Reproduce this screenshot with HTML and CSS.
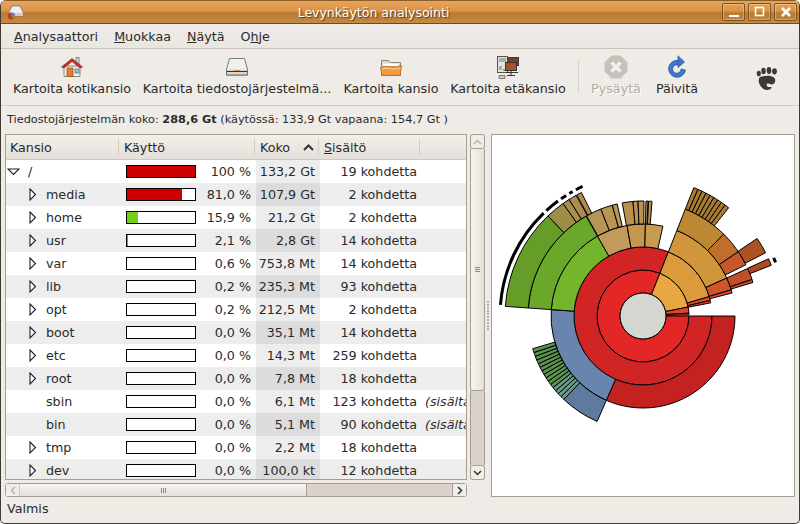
FILE: index.html
```html
<!doctype html>
<html lang="fi">
<head>
  <title>Levynkäytön analysointi</title>
  <meta charset="utf-8">
  <link rel="stylesheet" href="styles.css">
</head>
<body>
<div id="win">
  <!-- title bar -->
  <div class="titlebar">
    <svg class="appicon" width="18" height="16" viewBox="0 0 18 16">
      <path d="M5 2h8l3 6v4H2V8z" fill="#eeeeec" stroke="#777" stroke-width=".8"/>
      <path d="M2 9h14v3H2z" fill="#ccc"/>
      <circle cx="4.5" cy="12" r="3.4" fill="#c4302b"/>
      <path d="M4.5 12V8.6A3.4 3.4 0 0 1 7.9 12z" fill="#4c8fc9"/>
      <path d="M4.5 12h3.4a3.4 3.4 0 0 1-1.6 2.9z" fill="#6fae2c"/>
    </svg>
    <div class="wintitle">Levynkäytön analysointi</div>
    <div class="winbtns">
      <div class="winbtn"><svg width="24" height="22" viewBox="0 0 24 22"><path d="M7 15h10" stroke="#fff" stroke-width="2"/></svg></div>
      <div class="winbtn"><svg width="24" height="22" viewBox="0 0 24 22"><rect x="7.5" y="6.5" width="8" height="8" fill="none" stroke="#fff" stroke-width="1.6"/></svg></div>
      <div class="winbtn"><svg width="24" height="22" viewBox="0 0 24 22"><path d="M8 7l8 8M16 7l-8 8" stroke="#fff" stroke-width="2.6"/></svg></div>
    </div>
  </div>

  <!-- menu -->
  <div class="menubar">
    <span><u>A</u>nalysaattori</span>
    <span><u>M</u>uokkaa</span>
    <span><u>N</u>äytä</span>
    <span>O<u>h</u>je</span>
  </div>

  <!-- toolbar -->
  <div class="toolbar">
    <div class="tool t-home">
      <svg width="24" height="24" viewBox="0 0 24 24">
        <path d="M4 11h16v10.500H4z" fill="#f3f1ec" stroke="#8a8780"/>
        <rect x="16" y="2.500" width="3" height="6" fill="#d8d4cc" stroke="#8a8780"/>
        <path d="M1.500 12L12 3.500 22.500 12 20 13 12 6.500 4 13z" fill="#c4302b" stroke="#8f2320" stroke-width=".7"/>
        <rect x="7" y="13" width="6" height="8.500" fill="#e0812b" stroke="#9b5a16" stroke-width=".8"/>
        <rect x="15" y="14" width="4" height="4" fill="#8fc8d8" stroke="#5c7a86" stroke-width=".8"/>
      </svg>
      <span>Kartoita kotikansio</span>
    </div>
    <div class="tool t-fs">
      <svg width="24" height="24" viewBox="0 0 24 24">
        <path d="M4.500 3.500h15l3 11v5.500H1.500v-5.500z" fill="#f1f1ef" stroke="#7c7c78"/>
        <path d="M2 14.500h20v5.500H2z" fill="#d6d6d2"/>
        <path d="M2 16.500h20" stroke="#33332f"/>
        <path d="M9 15.500h6" stroke="#e8912c" stroke-width="1.200"/>
        <path d="M1.500 14.500v5.500h21v-5.500" fill="none" stroke="#6c6c68"/>
      </svg>
      <span>Kartoita tiedostojärjestelmä...</span>
    </div>
    <div class="tool t-dir">
      <svg width="24" height="24" viewBox="0 0 24 24">
        <path d="M2.500 5.500h7l2 2h10v13h-19z" fill="#d9d5cc" stroke="#8c8a84"/>
        <path d="M4 8.500h16v3H4z" fill="#fff"/>
        <path d="M1.500 12.500q4-2 9-1 6 1 12-1l-1.500 10H3z" fill="#f29a3f" stroke="#b7691d" stroke-width=".8"/>
        <path d="M3 13.500q4-1.500 8-.6 5 1 10-.5l-.2 1.300q-5 1.300-10 .4-4-.7-7.600.5z" fill="#fbc88a"/>
      </svg>
      <span>Kartoita kansio</span>
    </div>
    <div class="tool t-net">
      <svg width="24" height="24" viewBox="0 0 24 24">
        <rect x="1.500" y="1.500" width="10" height="16" fill="#e4e4e0" stroke="#55554f"/>
        <path d="M3 4h7M3 6h7M3 12h3M3 14h3" stroke="#77776f"/>
        <rect x="11.500" y="2.500" width="11" height="8" fill="#7e3f24" stroke="#3c3c38"/>
        <rect x="9.500" y="7.500" width="11" height="8" fill="#a5552c" stroke="#33332f"/>
        <path d="M10 17.500h12M15 16v4M11 20.500h8" stroke="#33332f"/>
        <rect x="7" y="14" width="2" height="2" fill="#7ac143"/>
        <path d="M3 20.500h6v3H3z" fill="#c8c8c4" stroke="#6a6a64" stroke-width=".8"/>
      </svg>
      <span>Kartoita etäkansio</span>
    </div>
    <div class="toolsep"></div>
    <div class="tool t-stop off">
      <svg width="24" height="24" viewBox="0 0 24 24">
        <path d="M7.500 .5h9L23.500 7.500v9L16.500 23.500h-9L.5 16.500v-9z" fill="#c5c1bb"/>
        <path d="M7.500 7.500l9 9M16.500 7.500l-9 9" stroke="#f2f0ed" stroke-width="3.600"/>
      </svg>
      <span>Pysäytä</span>
    </div>
    <div class="tool t-refresh">
      <svg width="24" height="24" viewBox="0 0 24 24">
        <path d="M14 5.500A8.500 8.500 0 1 0 20.500 15l-4.500-1a4.200 4.200 0 1 1-3-4z" fill="#3d78cc" stroke="#1f4f9c" stroke-width=".7"/>
        <path d="M13 .8L19.500 7 13 12.500z" fill="#3d78cc" stroke="#1f4f9c" stroke-width=".7"/>
      </svg>
      <span>Päivitä</span>
    </div>
    <svg class="gnome" width="22" height="27" viewBox="0 0 22 26">
      <path d="M4 11.500c4.500-1.500 11-2 14 .5 2.500 2.500 1 7-2 7-1.500 0-3-1.500-4.500-1-1.500.4-1 3 1 3.500 1.500.4 3-.5 3 .5 0 2-5 3.500-8 1.500C3.500 20.500 1 15 4 11.500z" fill="#3a3a38"/>
      <ellipse cx="2.800" cy="8" rx="2.100" ry="2.700" fill="#3a3a38"/>
      <ellipse cx="7.500" cy="5.500" rx="2.200" ry="3.200" fill="#3a3a38"/>
      <ellipse cx="13" cy="5" rx="2.300" ry="3.400" fill="#3a3a38"/>
      <ellipse cx="18.500" cy="5.800" rx="2.400" ry="3.100" fill="#3a3a38"/>
    </svg>
  </div>

  <div class="fsinfo">Tiedostojärjestelmän koko: <b>288,6 Gt</b> (käytössä: 133,9 Gt vapaana: 154,7 Gt )</div>

  <div class="panes">
    <!-- tree -->
    <div class="leftpane">
      <div class="treewrap">
        <div class="tree">
          <div class="thead">
            <div class="th c-name">Kansio</div>
            <div class="th c-use">Käyttö</div>
            <div class="th c-size">Koko<svg width="11" height="7" viewBox="0 0 11 7"><path d="M1 6l4.500-4.500L10 6" fill="none" stroke="#2e3436" stroke-width="2"/></svg></div>
            <div class="th c-items"><u>S</u>isältö</div>
            <div class="th c-rest"></div>
          </div>
          <div id="rows"></div>
        </div>
        <div class="vscroll">
          <div class="sbtn"><svg width="9" height="6" viewBox="0 0 9 6"><path d="M1 5l3.500-3.500L8 5" fill="none" stroke="#b5b0a8" stroke-width="1.500"/></svg></div>
          <div class="vthumb"><i></i><i></i><i></i></div>
          <div class="vtrack"></div>
          <div class="sbtn"><svg width="9" height="6" viewBox="0 0 9 6"><path d="M1 1l3.500 3.500L8 1" fill="none" stroke="#2e3436" stroke-width="1.500"/></svg></div>
        </div>
      </div>
      <div class="hscroll">
        <div class="hbtn"><svg width="6" height="9" viewBox="0 0 6 9"><path d="M5 1L1.500 4.500 5 8" fill="none" stroke="#b5b0a8" stroke-width="1.500"/></svg></div>
        <div class="hthumb"><i></i><i></i><i></i></div>
        <div class="htrack"></div>
        <div class="hbtn"><svg width="6" height="9" viewBox="0 0 6 9"><path d="M1 1l3.500 3.500L1 8" fill="none" stroke="#2e3436" stroke-width="1.500"/></svg></div>
      </div>
    </div>

    <div class="grip"><i></i><i></i><i></i><i></i><i></i><i></i><i></i><i></i><i></i><i></i></div>

    <!-- ring chart -->
    <div class="chart">
      <svg id="rings" width="302" height="361" viewBox="492 135 302 361"></svg>
    </div>
  </div>

  <div class="statusbar">Valmis</div>
</div>
<script src="chart.js"></script>
</body>
</html>
```

FILE: styles.css
```css
html, body {
  margin: 0px;
  padding: 0px;
  height: 100%;
  overflow: hidden;
}
body {
  background-color: #fff;
  font: 12.700px 'DejaVu Sans', sans-serif;
  color: #2a2a2a;
}
#win {
  width: 800px;
  height: 524px;
  box-sizing: border-box;
  display: flex;
  flex-direction: column;
  background-color: #efebe7;
  border: 1px solid #3f3a32;
  border-top: 0;
  border-radius: 6px 6px 5px 5px;
  overflow: hidden;
}

.titlebar {
  height: 24px;
  flex: none;
  display: flex;
  align-items: center;
  box-sizing: border-box;
  background: linear-gradient(#e7a45a 0%, #dc9448 45%, #b97a2f 55%, #c58a44 100%);
  border-bottom: 1px solid #6f4a1d;
  border-top: 1px solid #8a5f2a;
  position: relative;
}
.appicon {
  margin-left: 6px;
  flex: none;
}
.wintitle {
  flex: 1;
  text-align: center;
  color: #fff;
  text-shadow: 1px 1px 1px #5b3c12;
  padding-left: 0;
  font-size: 12.500px;
}
.winbtns {
  display: flex;
  gap: 3px;
  margin-right: 2px;
}
.winbtn {
  width: 23px;
  height: 18px;
  display: flex;
  align-items: center;
  justify-content: center;
  box-sizing: border-box;
  border: 1px solid #7c5524;
  border-radius: 2px;
  box-shadow: inset 0 0 0 1px rgba(255,255,255,.28);
}
.winbtn svg {
  flex: none;
}

.menubar {
  height: 24px;
  flex: none;
  display: flex;
  align-items: center;
  gap: 16px;
  padding-left: 13px;
  background: linear-gradient(#f1eeea, #e9e5df);
  border-bottom: 1px solid #cdc3b8;
}

.toolbar {
  height: 57px;
  flex: none;
  display: flex;
  align-items: flex-start;
  box-sizing: border-box;
  padding-top: 6px;
  border-bottom: 1px solid #d5cdc4;
}
.tool {
  display: flex;
  flex-direction: column;
  align-items: center;
  gap: 1px;
  flex: none;
  white-space: nowrap;
}
.tool svg {
  flex: none;
}
.tool span {
  line-height: 17px;
}
.t-home { width: 118px; margin-left: 12px; }
.t-fs { width: 190px; margin-left: 11px; }
.t-dir { width: 96px; margin-left: 11px; }
.t-net { width: 116px; margin-left: 11px; }
.t-stop { width: 50px; margin-left: 12px; }
.t-refresh { width: 42px; margin-left: 15px; }
.off span {
  color: #b0aca5;
  text-shadow: 1px 1px 0 #fff;
}
.toolsep {
  width: 1px;
  height: 33px;
  margin: 5px 0 0 12px;
  background-color: #d8d1c9;
  flex: none;
}
.gnome {
  margin: 10px 0 0 58px;
  flex: none;
}

.fsinfo {
  height: 28px;
  flex: none;
  line-height: 28px;
  padding-left: 6px;
  font-size: 11.300px;
  white-space: nowrap;
}

.panes {
  flex: 1;
  min-height: 0;
  display: flex;
  padding: 0 4px 0 4px;
}
.leftpane {
  width: 480px;
  flex: none;
  display: flex;
  flex-direction: column;
}
.treewrap {
  flex: 1;
  min-height: 0;
  display: flex;
  gap: 3px;
}
.tree {
  width: 462px;
  box-sizing: border-box;
  border: 1px solid #a79e92;
  background-color: #fff;
  overflow: hidden;
  flex: none;
}
.thead {
  height: 24px;
  display: flex;
  background: linear-gradient(#f3f0ec, #e4dfd9);
  border-bottom: 1px solid #cfc8bf;
}
.th {
  flex: none;
  box-sizing: border-box;
  line-height: 25px;
  padding-left: 4px;
  position: relative;
}
.th::after {
  content: "";
  position: absolute;
  right: 0;
  top: 4px;
  bottom: 4px;
  width: 1px;
  background-color: #d2ccc3;
}
.c-name { width: 113px; }
.c-use { width: 136px; padding-left: 5px; }
.c-size { width: 64px; padding-left: 5px; display: flex; align-items: center; justify-content: space-between; padding-right: 5px; }
.c-items { width: 101px; padding-left: 5px; }
.c-rest { flex: 1; }
.c-rest::after { display: none; }

.row {
  height: 23px;
  display: flex;
  align-items: center;
  white-space: nowrap;
}
.row.alt {
  background-color: #ededed;
}
.cell {
  flex: none;
  box-sizing: border-box;
  height: 23px;
  line-height: 23px;
}
.cell-name {
  width: 113px;
  display: flex;
  align-items: center;
  padding-left: 23px;
}
.cell-name.top {
  padding-left: 1px;
}
.cell-name svg {
  flex: none;
  margin-right: 9px;
}
.top svg {
  margin-right: 8px;
}
.noarrow {
  padding-left: 40px;
}
.cell-use {
  width: 137px;
  display: flex;
  align-items: center;
  padding-left: 7px;
}
.bar {
  width: 70px;
  height: 13px;
  box-sizing: border-box;
  border: 1px solid #000;
  background-color: #fff;
  flex: none;
}
.bar i {
  display: block;
  height: 100%;
}
.pct {
  flex: 1;
  text-align: right;
  padding-right: 5px;
}
.cell-size {
  width: 64px;
  text-align: right;
  padding-right: 5px;
  background-color: #ededed;
}
.alt .cell-size {
  background-color: #dcdcdc;
}
.cell-items {
  width: 97px;
  text-align: right;
}
.note {
  font-style: italic;
  padding-left: 8px;
  flex: none;
}

.vscroll {
  width: 15px;
  flex: none;
  display: flex;
  flex-direction: column;
  background-color: #dbd3cb;
}
.sbtn {
  height: 15px;
  flex: none;
  box-sizing: border-box;
  border: 1px solid #a79e92;
  border-radius: 3px;
  background-color: #f1eeea;
  display: flex;
  align-items: center;
  justify-content: center;
}
.vthumb {
  height: 242px;
  flex: none;
  box-sizing: border-box;
  border: 1px solid #a79e92;
  border-width: 0 1px 1px;
  border-radius: 0 0 3px 3px;
  background: linear-gradient(90deg, #f7f5f2, #e4dfd9);
  display: flex;
  flex-direction: column;
  align-items: center;
  justify-content: center;
  gap: 1px;
}
.vthumb i {
  width: 5px;
  height: 1px;
  background-color: #8f887e;
}
.vtrack {
  flex: 1;
  border-left: 1px solid #a79e92;
  border-right: 1px solid #a79e92;
}
.hscroll {
  height: 14px;
  width: 462px;
  flex: none;
  display: flex;
  margin: 3px 0 0;
  background-color: #dbd3cb;
  box-sizing: border-box;
  border: 1px solid #a79e92;
  border-radius: 3px;
}
.hbtn {
  width: 13px;
  flex: none;
  display: flex;
  align-items: center;
  justify-content: center;
  background-color: #f1eeea;
}
.hthumb {
  width: 288px;
  flex: none;
  box-sizing: border-box;
  border-left: 1px solid #cfc8bf;
  border-right: 1px solid #a79e92;
  background: linear-gradient(#f7f5f2, #e4dfd9);
  display: flex;
  align-items: center;
  justify-content: center;
  gap: 1px;
}
.hthumb i {
  width: 1px;
  height: 5px;
  background-color: #8f887e;
}
.htrack {
  flex: 1;
  border-right: 1px solid #a79e92;
}

.grip {
  width: 6px;
  flex: none;
  display: flex;
  flex-direction: column;
  align-items: center;
  justify-content: center;
  gap: 1px;
}
.grip i {
  width: 2px;
  height: 2px;
  background-color: #b8b0a6;
}
.chart {
  flex: 1;
  min-width: 0;
  box-sizing: border-box;
  border: 1px solid #a79e92;
  background-color: #fff;
  overflow: hidden;
}
.chart svg {
  display: block;
}

.statusbar {
  height: 26px;
  flex: none;
  line-height: 23px;
  padding-left: 6px;
  box-sizing: border-box;
}
```

FILE: chart.js
```js
// folder table
var rows = [
  ['/', 1, '#cc0000', 100, '100 %', '133,2 Gt', '19 kohdetta'],
  ['media', 1, '#cc0000', 81, '81,0 %', '107,9 Gt', '2 kohdetta'],
  ['home', 1, '#73d216', 15.9, '15,9 %', '21,2 Gt', '2 kohdetta'],
  ['usr', 1, '#5fb012', 2.1, '2,1 %', '2,8 Gt', '14 kohdetta'],
  ['var', 1, '#4e9a06', 0, '0,6 %', '753,8 Mt', '14 kohdetta'],
  ['lib', 1, '#4e9a06', 0, '0,2 %', '235,3 Mt', '93 kohdetta'],
  ['opt', 1, '#4e9a06', 0, '0,2 %', '212,5 Mt', '2 kohdetta'],
  ['boot', 1, '#4e9a06', 0, '0,0 %', '35,1 Mt', '14 kohdetta'],
  ['etc', 1, '#4e9a06', 0, '0,0 %', '14,3 Mt', '259 kohdetta'],
  ['root', 1, '#4e9a06', 0, '0,0 %', '7,8 Mt', '18 kohdetta'],
  ['sbin', 0, '#4e9a06', 0, '0,0 %', '6,1 Mt', '123 kohdetta', '(sisältää'],
  ['bin', 0, '#4e9a06', 0, '0,0 %', '5,1 Mt', '90 kohdetta', '(sisältää'],
  ['tmp', 1, '#4e9a06', 0, '0,0 %', '2,2 Mt', '18 kohdetta'],
  ['dev', 1, '#4e9a06', 0, '0,0 %', '100,0 kt', '12 kohdetta']
];

var right = '<svg width="8" height="13" viewBox="0 0 8 13"><path d="M1 1l5.500 5.500L1 12z" fill="#fff" stroke="#222" stroke-width="1.100"/></svg>';
var down = '<svg width="13" height="8" viewBox="0 0 13 8"><path d="M1 1h11L6.500 6.500z" fill="#fff" stroke="#222" stroke-width="1.100"/></svg>';

var html = '';
rows.forEach(function (r, i) {
  var cls = 'cell cell-name' + (i == 0 ? ' top' : '') + (r[1] ? '' : ' noarrow');
  var arrow = i == 0 ? down : (r[1] ? right : '');
  html += '<div class="row' + (i % 2 ? ' alt' : '') + '">' +
    '<div class="' + cls + '">' + arrow + '<span>' + r[0] + '</span></div>' +
    '<div class="cell cell-use"><div class="bar"><i style="width:' + r[3] + '%;background:' + r[2] + '"></i></div><span class="pct">' + r[4] + '</span></div>' +
    '<div class="cell cell-size">' + r[5] + '</div>' +
    '<div class="cell cell-items">' + r[6] + '</div>' +
    (r[7] ? '<div class="note">' + r[7] + '</div>' : '') +
    '</div>';
});
document.getElementById('rows').innerHTML = html;

// rings: depth, from, to (degrees clockwise from north), colour
var cx = 643, cy = 316;
var segs = [
  [0, 90, 381.6, '#e32727'],
  [0, 21.6, 78.8, '#eba73f'],
  [0, 78.8, 86.4, '#e4432f'],
  [0, 86.4, 88.6, '#e4432f'],

  [1, 90, 381.6, '#d12525'],
  [1, 21.6, 73.7, '#db9b3d'],
  [1, 73.7, 77, '#e4432f'],
  [1, 77, 79, '#e4432f'],

  [2, 90, 203.5, '#c42121'],
  [2, 203.5, 274, '#6a85ad'],
  [2, 274, 330.3, '#73b52b'],
  [2, 330.3, 350, '#c19a5c'],
  [2, 350, 1.5 + 360, '#c4994f'],
  [2, 1.5, 12.5, '#c79c52'],
  [2, 21.6, 65.6, '#d0963c'],
  [2, 65.6, 73.5, '#cf552c'],
  [2, 73.5, 75.5, '#e14a2e'],

  [3, 203.5, 223.5, '#5e7a9f'],
  [3, 274, 330.3, '#6aa82a'],
  [3, 330.6, 338.5, '#b99555'],
  [3, 338.5, 344.5, '#b99555'],
  [3, 344.5, 347, '#b99555'],
  [3, 349.6, 355, '#bc9150'],
  [3, 355, 357.5, '#bc9150'],
  [3, 357.5, 360.5, '#bc9150'],
  [3, 1.5, 2.5, '#bc9150'],
  [3, 2.8, 4.5, '#bc9150'],
  [3, 21.6, 44.6, '#bd8833'],
  [3, 44.6, 56, '#bf6f2b'],
  [3, 56, 63.5, '#c4582b'],
  [3, 65.6, 71.5, '#c14f2a'],
  [3, 71.5, 73, '#cc5129'],

  [4, 274, 316.5, '#659d28'],
  [4, 316.5, 324.6, '#9c8f45'],
  [4, 324.6, 327.6, '#ac8d50'],
  [4, 327.6, 331, '#ac8d50'],
  [4, 331.3, 333.5, '#b08a4a'],
  [4, 55.8, 62.7, '#ad5222'],
  [4, 65.5, 68.4, '#b04a25']
];

function pt(r, a) {
  var t = a * Math.PI / 180;
  return (cx + r * Math.sin(t)).toFixed(2) + ' ' + (cy - r * Math.cos(t)).toFixed(2);
}
function sector(r0, r1, a0, a1, fill) {
  var big = a1 - a0 > 180 ? 1 : 0;
  return '<path d="M' + pt(r0, a0) + 'A' + r0 + ' ' + r0 + ' 0 ' + big + ' 1 ' + pt(r0, a1) +
    'L' + pt(r1, a1) + 'A' + r1 + ' ' + r1 + ' 0 ' + big + ' 0 ' + pt(r1, a0) + 'Z" fill="' + fill + '"/>';
}
function ringSeg(d, a0, a1, fill) {
  return sector(23 + d * 23, 46 + d * 23, a0, a1, fill);
}
function arc(a0, a1) {
  return '<path class="mark" d="M' + pt(143, a0) + 'A143 143 0 0 1 ' + pt(143, a1) + '" fill="none" stroke="#000" stroke-width="3"/>';
}

var out = '<g stroke="#000" stroke-width="1">';
segs.forEach(function (s) {
  out += ringSeg(s[0], s[1], s[2], s[3]);
});
// small folders, too many to list
var i, a;
for (i = 0; i < 15; i++) {
  a = 223.5 + i * 2;
  out += ringSeg(3, a, a + 2, i < 4 ? '#6a9a8a' : '#5b9350');
}
for (i = 0; i < 9; i++) {
  a = 21.6 + i * 1.86;
  out += ringSeg(4, a, a + 1.86, '#a97b32');
}
out += '</g>';
out += '<circle cx="' + cx + '" cy="' + cy + '" r="23" fill="#d3d7cf" stroke="#000" stroke-width="1"/>';
out += arc(274.5, 316) + arc(317.5, 323.5) + arc(325, 327.5) + arc(329, 330.5) + arc(332, 335) + arc(66, 68);
document.getElementById('rings').innerHTML = out;
```
